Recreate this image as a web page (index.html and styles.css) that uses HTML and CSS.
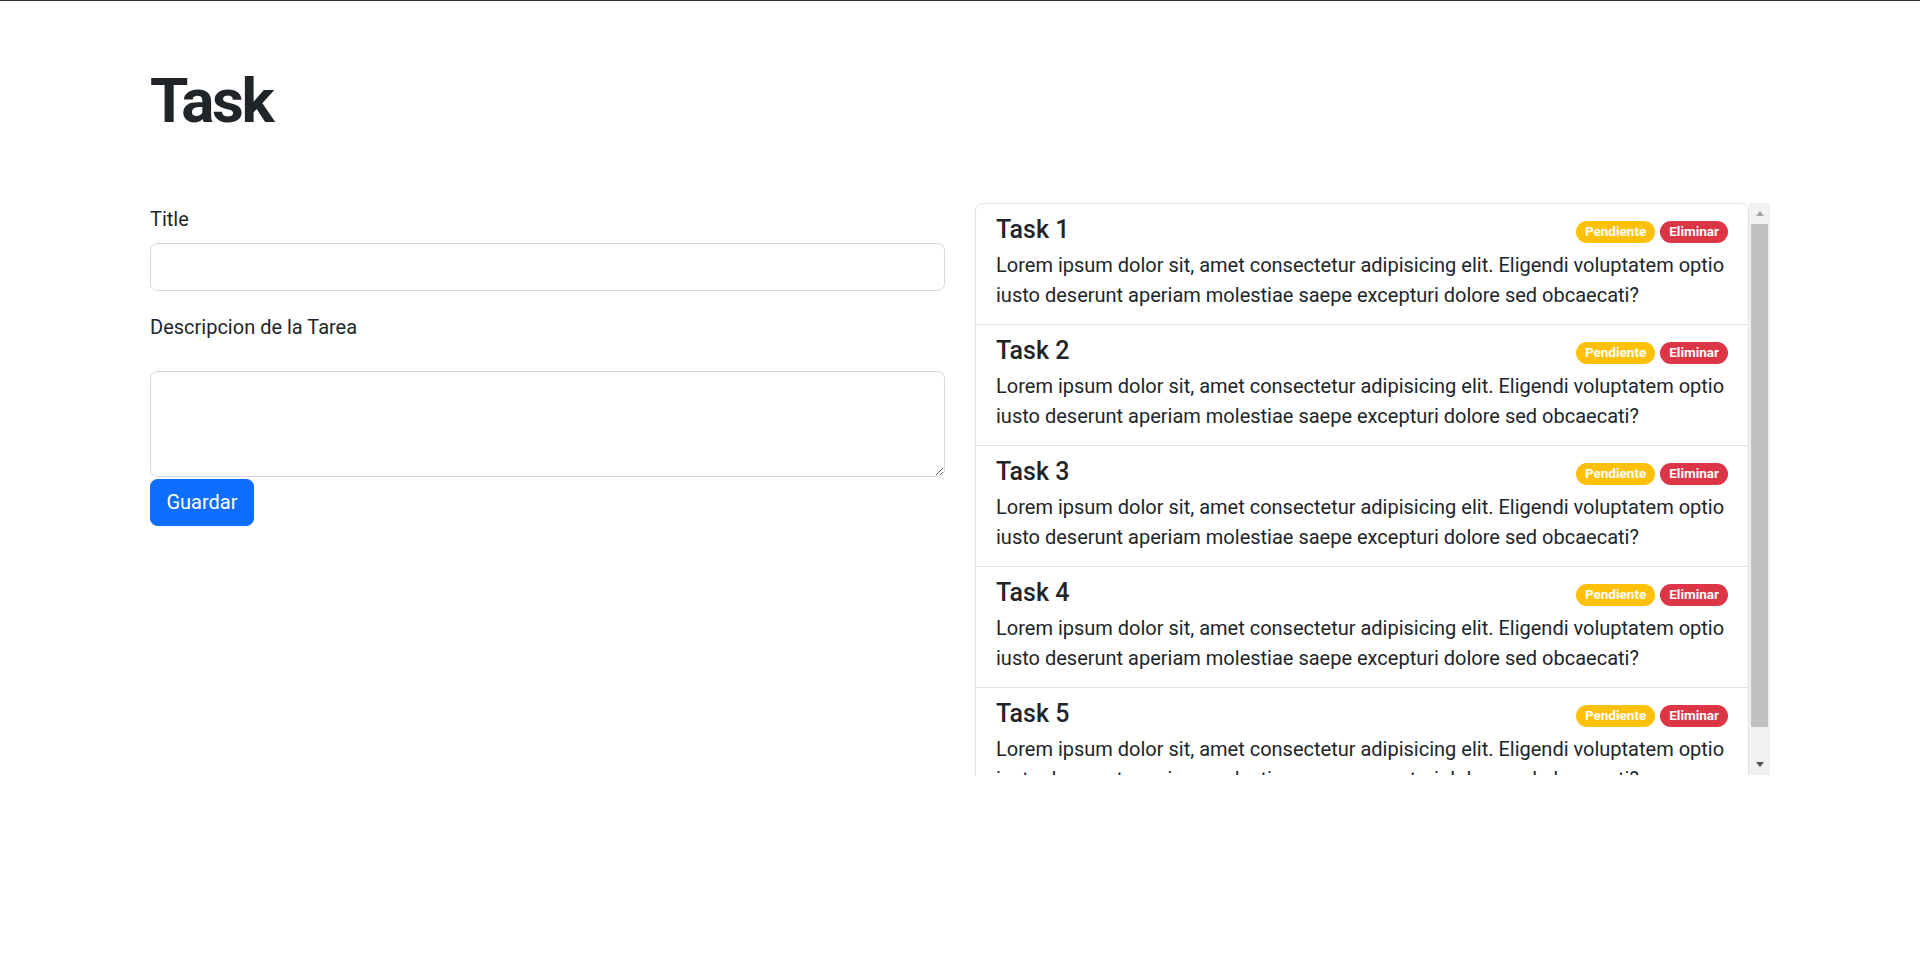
FILE: index.html
```html
<!DOCTYPE html>
<html lang="es">
<head>
<meta charset="utf-8">
<title>Task</title>
<link rel="stylesheet" href="styles.css">
</head>
<body>
<div class="container">
  <h1 class="page-title">Task</h1>
  <div class="row">
    <form class="task-form">
      <label class="form-label" for="title">Title</label>
      <input class="form-control field-gap" id="title" type="text">
      <label class="form-label desc-label" for="desc">Descripcion de la Tarea</label>
      <textarea class="form-control textarea" id="desc" rows="3"></textarea>
      <button class="btn-primary" type="button">Guardar</button>
    </form>
    <div class="list-wrap">
      <div class="list-scroll">
        <div class="list-group">
          <div class="list-item">
            <div class="item-head"><h5 class="item-title">Task 1</h5><small class="badges"><span class="badge warn">Pendiente</span><span class="badge danger">Eliminar</span></small></div>
            <p class="item-text">Lorem ipsum dolor sit, amet consectetur adipisicing elit. Eligendi voluptatem optio iusto deserunt aperiam molestiae saepe excepturi dolore sed obcaecati?</p>
          </div>
          <div class="list-item">
            <div class="item-head"><h5 class="item-title">Task 2</h5><small class="badges"><span class="badge warn">Pendiente</span><span class="badge danger">Eliminar</span></small></div>
            <p class="item-text">Lorem ipsum dolor sit, amet consectetur adipisicing elit. Eligendi voluptatem optio iusto deserunt aperiam molestiae saepe excepturi dolore sed obcaecati?</p>
          </div>
          <div class="list-item">
            <div class="item-head"><h5 class="item-title">Task 3</h5><small class="badges"><span class="badge warn">Pendiente</span><span class="badge danger">Eliminar</span></small></div>
            <p class="item-text">Lorem ipsum dolor sit, amet consectetur adipisicing elit. Eligendi voluptatem optio iusto deserunt aperiam molestiae saepe excepturi dolore sed obcaecati?</p>
          </div>
          <div class="list-item">
            <div class="item-head"><h5 class="item-title">Task 4</h5><small class="badges"><span class="badge warn">Pendiente</span><span class="badge danger">Eliminar</span></small></div>
            <p class="item-text">Lorem ipsum dolor sit, amet consectetur adipisicing elit. Eligendi voluptatem optio iusto deserunt aperiam molestiae saepe excepturi dolore sed obcaecati?</p>
          </div>
          <div class="list-item">
            <div class="item-head"><h5 class="item-title">Task 5</h5><small class="badges"><span class="badge warn">Pendiente</span><span class="badge danger">Eliminar</span></small></div>
            <p class="item-text">Lorem ipsum dolor sit, amet consectetur adipisicing elit. Eligendi voluptatem optio iusto deserunt aperiam molestiae saepe excepturi dolore sed obcaecati?</p>
          </div>
        </div>
      </div>
      <div class="scrollbar" aria-hidden="true">
        <div class="sb-btn"><span class="arrow-up"></span></div>
        <div class="sb-track"><div class="sb-thumb"></div></div>
        <div class="sb-btn"><span class="arrow-down"></span></div>
      </div>
    </div>
  </div>
</div>
</body>
</html>
```
FILE: styles.css
```css
*, *::before, *::after { box-sizing: border-box; }

html, body { height: 100%; }

body {
  margin: 0;
  border-top: 1px solid #2f323c;
  background: #fff;
  color: #212529;
  font-family: Roboto, "Liberation Sans", Arial, sans-serif;
  font-size: 20px;
  line-height: 30px;
}

.container {
  width: 1650px;
  margin: 0 auto;
  padding: 0 15px;
}

.page-title {
  margin: 62px 0 65px;
  font-size: 62px;
  line-height: 75px;
  font-weight: 700;
  letter-spacing: -2.5px;
  color: #212529;
}

.row {
  display: grid;
  grid-template-columns: 795px 795px;
  column-gap: 30px;
  align-items: start;
}

/* ---------- form ---------- */
.task-form {
  display: flex;
  flex-direction: column;
  align-items: flex-start;
}

.form-label {
  display: block;
  margin-bottom: 10px;
  line-height: 30px;
  padding-top: 1px;
  height: 30px;
}

.form-control {
  display: block;
  width: 100%;
  font: inherit;
  color: #212529;
  background: #fff;
  border: 1px solid #d4d7db;
  border-radius: 7.5px;
  padding: 7.5px 15px;
  outline: none;
}

input.form-control { height: 48px; }

.field-gap { margin-bottom: 20px; }

.desc-label { margin-bottom: 30px; }

.textarea {
  height: 106px;
  resize: vertical;
}

.btn-primary {
  margin-top: 1.5px;
  height: 47.5px;
  padding: 0 15px;
  min-width: 104px;
  font: inherit;
  color: #fff;
  background: #0d6efd;
  border: 1px solid #0d6efd;
  border-radius: 7.5px;
  cursor: pointer;
}

/* ---------- list ---------- */
.list-wrap {
  display: flex;
  height: 572px;
}

.list-scroll {
  flex: 1;
  min-width: 0;
  overflow: hidden;
}

.scrollbar {
  width: 21px;
  flex: none;
  display: flex;
  flex-direction: column;
  background: #f1f1f1;
}

.sb-btn {
  height: 21px;
  flex: none;
  display: flex;
  align-items: center;
  justify-content: center;
}

.arrow-up {
  width: 0;
  height: 0;
  border-left: 4.5px solid transparent;
  border-right: 4.5px solid transparent;
  border-bottom: 5px solid #a3a3a3;
}

.arrow-down {
  width: 0;
  height: 0;
  border-left: 4.5px solid transparent;
  border-right: 4.5px solid transparent;
  border-top: 5px solid #505050;
}

.sb-track {
  flex: 1;
  padding: 0 2px;
}

.sb-thumb {
  height: 503px;
  background: #c1c1c1;
}

.list-group {
  display: flex;
  flex-direction: column;
  border-radius: 7.5px;
}

.list-item {
  padding: 10px 20px;
  border: 1px solid #dee2e6;
  border-top-width: 0;
  background: #fff;
}

.list-item:first-child {
  border-top-width: 1px;
  border-top-left-radius: 7.5px;
  border-top-right-radius: 7.5px;
}

.item-head {
  display: flex;
  justify-content: space-between;
  align-items: flex-start;
  margin-bottom: 5px;
}

.item-title {
  margin: 0;
  padding-top: 1px;
  font-size: 25px;
  line-height: 29px;
  font-weight: 500;
  color: #212529;
}

.badges {
  display: flex;
  gap: 5px;
  margin-top: 7px;
}

.badge {
  display: inline-block;
  padding: 4.3px 9px;
  font-size: 13.5px;
  line-height: 13.5px;
  font-weight: 700;
  color: #fff;
  border-radius: 50rem;
  white-space: nowrap;
}

.warn { background: #ffc107; }
.danger { background: #dc3545; }

.item-text {
  margin: 0 0 5px;
  padding-top: 1px;
  line-height: 30px;
  height: 60px;
}
```
